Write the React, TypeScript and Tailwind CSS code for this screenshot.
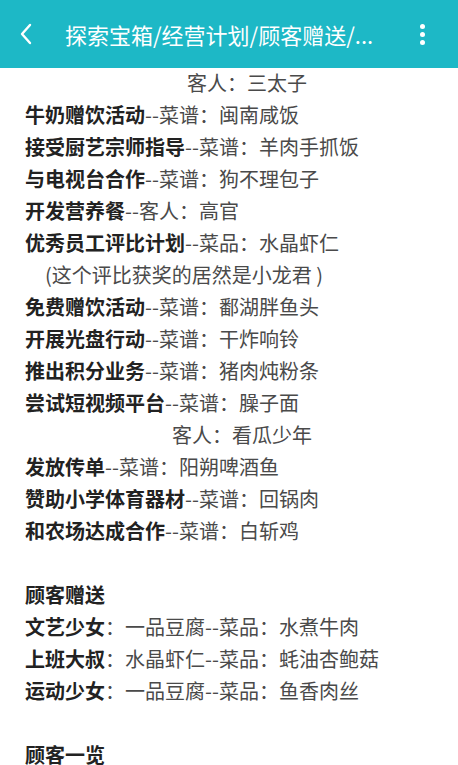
import React from 'react';

type Line = { bold?: string; text?: string; indent?: string };

const plan: Line[] = [
  { text: '客人：三太子', indent: 'pl-[162px]' },
  { bold: '牛奶赠饮活动', text: '--菜谱：闽南咸饭' },
  { bold: '接受厨艺宗师指导', text: '--菜谱：羊肉手抓饭' },
  { bold: '与电视台合作', text: '--菜谱：狗不理包子' },
  { bold: '开发营养餐', text: '--客人：高官' },
  { bold: '优秀员工评比计划', text: '--菜品：水晶虾仁' },
  { text: '(这个评比获奖的居然是小龙君 )', indent: 'pl-[20px]' },
  { bold: '免费赠饮活动', text: '--菜谱：鄱湖胖鱼头' },
  { bold: '开展光盘行动', text: '--菜谱：干炸响铃' },
  { bold: '推出积分业务', text: '--菜谱：猪肉炖粉条' },
  { bold: '尝试短视频平台', text: '--菜谱：臊子面' },
  { text: '客人：看瓜少年', indent: 'pl-[147px]' },
  { bold: '发放传单', text: '--菜谱：阳朔啤酒鱼' },
  { bold: '赞助小学体育器材', text: '--菜谱：回锅肉' },
  { bold: '和农场达成合作', text: '--菜谱：白斩鸡' },
];

const gifts: Line[] = [
  { bold: '文艺少女', text: '：一品豆腐--菜品：水煮牛肉' },
  { bold: '上班大叔', text: '：水晶虾仁--菜品：蚝油杏鲍菇' },
  { bold: '运动少女', text: '：一品豆腐--菜品：鱼香肉丝' },
];

const Row = ({ line }: { line: Line }) => (
  <div className={`h-[32px] leading-[32px] whitespace-nowrap ${line.indent ?? ''}`}>
    {line.bold && <span className="font-bold text-[#222]">{line.bold}</span>}
    {line.text && <span className="text-[#4a4a4a]">{line.text}</span>}
  </div>
);

export default function App() {
  return (
    <div
      className="w-[458px] h-[765px] overflow-hidden bg-white"
      style={{ fontFamily: '"Noto Sans CJK SC", "Noto Sans", sans-serif' }}
    >
      <header className="h-[68px] bg-[#1db8c6] flex items-center text-white">
        <div className="w-[65px] flex pl-[19px]">
          <svg width="14" height="22" viewBox="0 0 14 22" fill="none">
            <path d="M11 2 L3 11 L11 20" stroke="white" strokeWidth="2.4" strokeLinecap="round" strokeLinejoin="round" />
          </svg>
        </div>
        <div className="flex-1 text-[22px] whitespace-nowrap overflow-hidden">探索宝箱/经营计划/顾客赠送/...</div>
        <div className="w-[68px] flex flex-col items-center gap-[3px] pr-[4px]">
          <span className="w-[5px] h-[5px] rounded-full bg-white" />
          <span className="w-[5px] h-[5px] rounded-full bg-white" />
          <span className="w-[5px] h-[5px] rounded-full bg-white" />
        </div>
      </header>
      <main className="pl-[25px] text-[20px] -mt-[1px]">
        {plan.map((l, i) => (
          <Row key={i} line={l} />
        ))}
        <div className="h-[32px]" />
        <Row line={{ bold: '顾客赠送' }} />
        {gifts.map((l, i) => (
          <Row key={i} line={l} />
        ))}
        <div className="h-[32px]" />
        <Row line={{ bold: '顾客一览' }} />
      </main>
    </div>
  );
}
